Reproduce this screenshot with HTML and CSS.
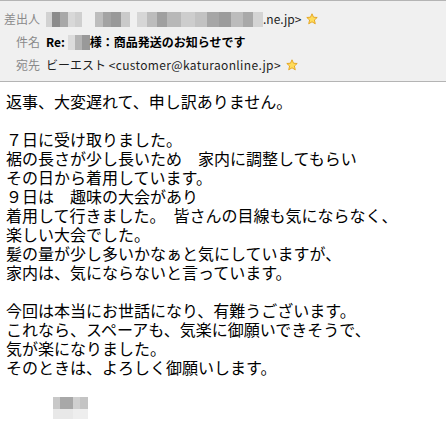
FILE: index.html
```html
<!DOCTYPE html>
<html lang="ja">
<head>
    <meta charset="UTF-8">
    <meta name="viewport" content="width=device-width, initial-scale=1.0">
    <title>Re: 商品発送のお知らせです</title>
    <link rel="stylesheet" href="styles.css">
</head>
<body>
    <div class="mail">
        <div class="mail-head">
            <div class="head-row">
                <span class="head-label">差出人</span>
                <span class="head-value"><span class="blur blur-name"></span><span class="gap"></span><span class="blur blur-mid"></span><span class="gap small"></span><span class="blur blur-addr"></span>.ne.jp&gt;<svg class="star" viewBox="0 0 12 12"><polygon points="6,0.8 7.5,4.2 11.2,4.5 8.4,7 9.3,10.8 6,8.8 2.7,10.8 3.6,7 0.8,4.5 4.5,4.2"/></svg></span>
            </div>
            <div class="head-row">
                <span class="head-label">件名</span>
                <span class="head-value subject">Re: <span class="blur blur-subject"></span>様：商品発送のお知らせです</span>
            </div>
            <div class="head-row">
                <span class="head-label">宛先</span>
                <span class="head-value">ビーエスト <span class="latin">&lt;customer@katuraonline.jp&gt;</span><svg class="star" viewBox="0 0 12 12"><polygon points="6,0.8 7.5,4.2 11.2,4.5 8.4,7 9.3,10.8 6,8.8 2.7,10.8 3.6,7 0.8,4.5 4.5,4.2"/></svg></span>
            </div>
        </div>

        <div class="mail-body">
            <p>返事、大変遅れて、申し訳ありません。</p>
            <p>７日に受け取りました。<br>
            裾の長さが少し長いため　家内に調整してもらい<br>
            その日から着用しています。<br>
            ９日は　趣味の大会があり<br>
            着用して行きました。　皆さんの目線も気にならなく、<br>
            楽しい大会でした。<br>
            髪の量が少し多いかなぁと気にしていますが、<br>
            家内は、気にならないと言っています。</p>
            <p>今回は本当にお世話になり、有難うございます。<br>
            これなら、スペーアも、気楽に御願いできそうで、<br>
            気が楽になりました。<br>
            そのときは、よろしく御願いします。</p>
            <div class="signature"></div>
        </div>
    </div>
</body>
</html>
```

FILE: styles.css
```css
* {
    margin: 0;
    padding: 0;
    box-sizing: border-box;
}

body {
    background: white;
    color: #000;
}

.mail-head {
    background: #f0f0f0;
    border-top: 1px solid #b4b4b4;
    border-bottom: 1px solid #b4b4b4;
    padding: 6px 0 4px;
    height: 82px;
    font-family: "Noto Sans CJK JP", "Noto Sans", sans-serif;
    font-size: 12px;
}

.head-row {
    display: grid;
    grid-template-columns: 40px 1fr;
    column-gap: 6px;
    height: 23px;
    line-height: 23px;
    white-space: nowrap;
}

.head-label {
    text-align: right;
    color: #8a8a8a;
}

.head-value {
    color: #1e1e1e;
}

.head-value.subject {
    font-weight: bold;
    color: #000;
}

.latin {
    letter-spacing: 0.35px;
}

.star {
    width: 12px;
    height: 12px;
    margin-left: 5px;
    vertical-align: -1px;
}

.star polygon {
    fill: #ffdc5a;
    stroke: #e3a21a;
    stroke-width: 0.9;
    stroke-linejoin: round;
}

.blur {
    display: inline-block;
    height: 15px;
    vertical-align: -3px;
}

.gap {
    display: inline-block;
    width: 13px;
}

.gap.small {
    width: 7px;
}

.blur-name {
    width: 36px;
    background: linear-gradient(to right, #d2d2d2 0 6px, #8c8c8c 6px 14px, #a8a8a8 14px 22px, #d8d8d8 22px 29px, #cfcfcf 29px);
}

.blur-mid {
    width: 35px;
    background: linear-gradient(to right, #bdbdbd 0 8px, #a3a3a3 8px 16px, #999 16px 26px, #cacaca 26px);
}

.blur-addr {
    width: 126px;
    background: linear-gradient(to right, #d6d6d6 0 10px, #bcbcbc 10px 20px, #a0a0a0 20px 30px, #b8b8b8 30px 44px, #cdcdcd 44px 58px, #c2c2c2 58px 70px, #a6a6a6 70px 82px, #9c9c9c 82px 94px, #bcbcbc 94px 106px, #a9a9a9 106px 116px, #d4d4d4 116px);
}

.blur-subject {
    width: 22px;
    background: linear-gradient(to right, #dcdcdc 0 7px, #b4b4b4 7px 14px, #999 14px);
}

.mail-body {
    padding: 10px 6px 0;
    font-family: "Noto Sans CJK JP", sans-serif;
    font-size: 16px;
    line-height: 19px;
}

.mail-body p {
    margin-bottom: 19px;
}

.signature {
    width: 35px;
    height: 22px;
    margin: 20px 0 0 47px;
    background:
        linear-gradient(to right, #c8c8c8 0 7px, #a8a8a8 7px 20px, #d0d0d0 20px 27px, #c4c4c4 27px) top / 100% 12px no-repeat,
        linear-gradient(to right, #e8e8e8 0 20px, #eeeeee 20px) bottom / 100% 10px no-repeat;
}
```
